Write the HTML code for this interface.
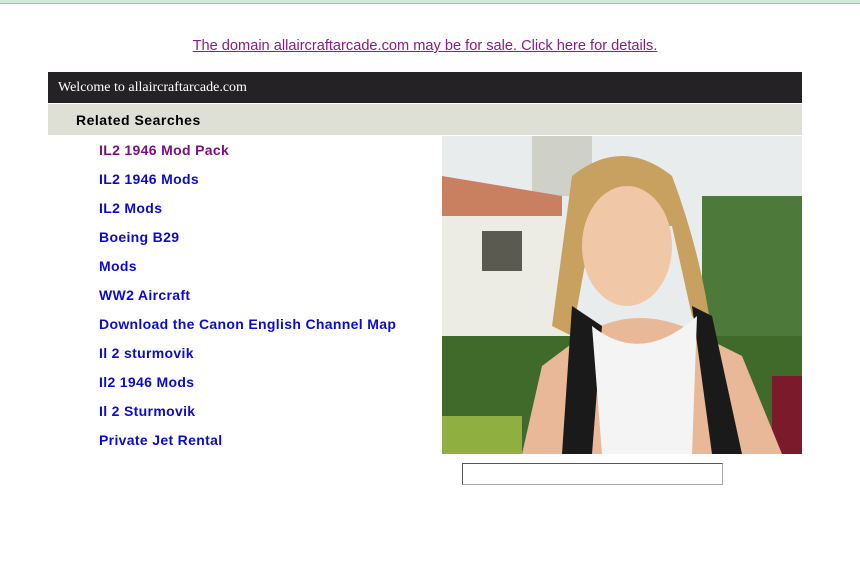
<!DOCTYPE html>
<html><head><style>
body{margin:0;background:#fff;font-family:"Liberation Sans",Arial,sans-serif;width:860px;height:565px;overflow:hidden;position:relative}
.top{position:absolute;left:0;top:0;width:860px;height:3px;background:#d5e8dc;border-bottom:1px solid #9fbfae}
.dom{position:absolute;top:38px;left:0;width:850px;text-align:center;font-size:14.6px}
.dom a{color:#8b1a8b;text-decoration:underline}
.hd{position:absolute;left:48px;top:72px;width:754px;height:31px;background:#252225;color:#fff;font-family:"Liberation Serif",serif;font-size:14px;line-height:32px;padding-left:10px;box-sizing:border-box}
.rs{position:absolute;left:48px;top:104px;width:754px;height:31px;background:#dfe0d5;font-weight:bold;font-size:14px;letter-spacing:0.5px;line-height:32px;padding-left:28px;box-sizing:border-box;color:#000}
.links{position:absolute;left:99px;top:141px}
.links a{display:block;height:29px;line-height:18px;font-weight:bold;font-size:14px;letter-spacing:0.33px;color:#0b0bd0;text-decoration:none}
.links a.v{color:#7a1080}
.photo{position:absolute;left:442px;top:136px;width:360px;height:318px}
.inp{position:absolute;left:462px;top:463px;width:261px;height:22px;box-sizing:border-box;border:1px solid #aaa;border-top-color:#555;border-left-color:#555}
</style></head><body>
<div class="top"></div>
<div class="dom"><a href="#">The domain allaircraftarcade.com may be for sale. Click here for details.</a></div>
<div class="hd">Welcome to allaircraftarcade.com</div>
<div class="rs">Related Searches</div>
<div class="links">
<a class="v" href="#">IL2 1946 Mod Pack</a>
<a href="#">IL2 1946 Mods</a>
<a href="#">IL2 Mods</a>
<a href="#">Boeing B29</a>
<a href="#">Mods</a>
<a href="#">WW2 Aircraft</a>
<a href="#">Download the Canon English Channel Map</a>
<a href="#">Il 2 sturmovik</a>
<a href="#">Il2 1946 Mods</a>
<a href="#">Il 2 Sturmovik</a>
<a href="#">Private Jet Rental</a>
</div>
<svg class="photo" viewBox="0 0 360 318">
<rect width="360" height="318" fill="#e8ecec"/>
<rect x="90" y="0" width="60" height="60" fill="#cfd0c8"/>
<path d="M0 40 L120 60 L120 90 L0 80Z" fill="#c88060"/>
<rect x="0" y="80" width="130" height="130" fill="#ecebe4"/>
<rect x="40" y="95" width="40" height="40" fill="#5a5a50"/>
<rect x="260" y="60" width="100" height="150" fill="#4d7a3a"/>
<rect x="0" y="200" width="360" height="118" fill="#3f6a2a"/>
<rect x="0" y="280" width="80" height="38" fill="#8fb040"/>
<rect x="330" y="240" width="30" height="78" fill="#7a1a2a"/>
<path d="M130 40 Q180 0 230 40 Q260 120 270 200 L250 180 L230 90 L150 90 L130 200 L110 190Z" fill="#c8a060"/>
<ellipse cx="185" cy="110" rx="45" ry="60" fill="#f0c8a8"/>
<path d="M140 200 Q185 170 240 190 L300 220 L340 318 L80 318 L100 230Z" fill="#e8b898"/>
<path d="M130 170 L120 318 L150 318 L160 190Z M250 170 L270 318 L300 318 L270 180Z" fill="#1a1a1a"/>
<path d="M150 190 L160 318 L250 318 L255 180 Q200 230 150 190Z" fill="#f4f4f4"/>
</svg>
<div class="inp"></div>
</body></html>
